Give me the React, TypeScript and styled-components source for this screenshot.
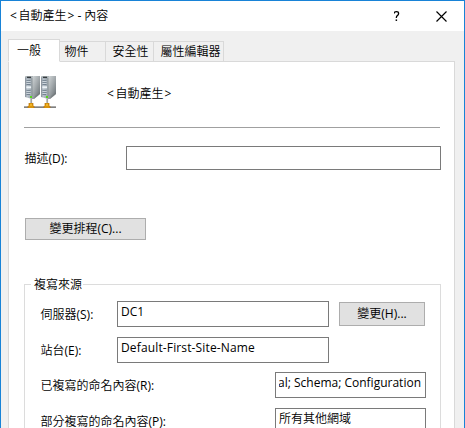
import React from "react";
import styled, { createGlobalStyle } from "styled-components";

const Global = createGlobalStyle`
  *, *::before, *::after { box-sizing: border-box; }
  body { margin: 0; overflow: hidden; }
`;

const Dialog = styled.div`
  width: 465px;
  height: 428px;
  overflow: hidden;
  display: flex;
  flex-direction: column;
  border: 1px solid #1883d7;
  border-bottom: 0;
  background: #f0f0f0;
  color: #000;
  font: 400 12px/16px "Open Sans", "Noto Sans CJK TC DemiLight", "Noto Sans CJK TC Light", "Noto Sans CJK TC", sans-serif;
  white-space: nowrap;
`;

const TitleBar = styled.header`
  height: 30px;
  flex: none;
  display: flex;
  align-items: center;
  background: #fff;
  padding: 0 17px 0 9px;
`;

const Title = styled.h1`
  margin: 0;
  flex: 1;
  font: inherit;
`;

const Bracket = styled.span<{ $closing?: boolean }>`
  margin-right: ${(p) => (p.$closing ? 0 : 1.5)}px;
  margin-left: ${(p) => (p.$closing ? 1 : 0)}px;
`;

const TitleButton = styled.button`
  border: 0;
  padding: 0;
  background: none;
  display: flex;
  margin-left: 35px;
`;

const Tabs = styled.nav`
  display: flex;
  align-items: flex-end;
  height: 23px;
  margin: 8px 0 -1px 7px;
  flex: none;
  position: relative;
`;

const Tab = styled.button<{ $width: number; $active?: boolean; $inset: number }>`
  width: ${(p) => p.$width}px;
  height: ${(p) => (p.$active ? 23 : 21)}px;
  border: 1px solid #d9d9d9;
  border-left-width: ${(p) => (p.$active ? 1 : 0)}px;
  border-bottom-color: ${(p) => (p.$active ? "#fff" : "#d9d9d9")};
  background: ${(p) => (p.$active ? "#fff" : "#f0f0f0")};
  padding: 0 0 0 ${(p) => p.$inset}px;
  font: inherit;
  line-height: 18px;
  color: #000;
  text-align: left;
`;

const Panel = styled.main`
  flex: 1;
  min-height: 0;
  margin: 0 9px 0 7px;
  padding: 14px 13px 0 15px;
  border: 1px solid #d9d9d9;
  border-bottom: 0;
  background: #fff;
`;

const Heading = styled.div`
  display: flex;
  align-items: center;
  height: 52px;
  gap: 51px;
  padding-bottom: 19px;
  border-bottom: 1px solid #a0a0a0;
  width: 416px;
`;

const ObjectName = styled.span`
  padding-top: 4px;
`;

const DescriptionRow = styled.div`
  display: flex;
  align-items: center;
  height: 24px;
  margin-top: 18px;
`;

const Label = styled.label<{ $width: number }>`
  width: ${(p) => p.$width}px;
  flex: none;
  padding-left: 0.5px;
  line-height: 13px;
`;

const Field = styled.div<{ $width: number; $spacing?: number; $end?: boolean }>`
  width: ${(p) => p.$width}px;
  height: 26px;
  flex: none;
  border: 1px solid #7a7a7a;
  background: #fff;
  padding: 2px 3px;
  letter-spacing: ${(p) => p.$spacing ?? 0}px;
  display: flex;
  justify-content: ${(p) => (p.$end ? "flex-end" : "flex-start")};
`;

const Clip = styled.span`
  overflow: hidden;
  display: flex;
  justify-content: flex-end;
  width: 143px;
  margin-right: 1px;
`;

const DescriptionField = styled(Field)`
  height: 24px;
`;

const PushButton = styled.button<{ $width: number; $height: number }>`
  width: ${(p) => p.$width}px;
  height: ${(p) => p.$height}px;
  padding: 0;
  border: 1px solid #adadad;
  background: #e1e1e1;
  color: #000;
  font: inherit;
  line-height: 18px;
`;

const ScheduleButton = styled(PushButton)`
  display: block;
  margin: 48px 0 0 1px;
`;

const Group = styled.fieldset`
  width: 417px;
  height: 170px;
  margin: 37px 0 0;
  padding: 0 14px 0 15px;
  border: 1px solid #dcdcdc;
  min-width: 0;
`;

const Legend = styled.legend`
  height: 15px;
  padding: 0 3px;
  margin-left: -9px;
  width: 52px;
`;

const Rows = styled.div`
  display: flex;
  flex-direction: column;
  gap: 10px;
  padding-top: 9px;
`;

const Row = styled.div<{ $tight?: boolean }>`
  display: flex;
  align-items: center;
  height: 26px;
  margin-top: ${(p) => (p.$tight ? -1 : 0)}px;
`;

const ChangeButton = styled(PushButton)`
  margin-left: 10px;
`;

const ServerPair = () => (
  <svg width="32" height="32" viewBox="0 0 32 32" aria-hidden="true">
    <defs>
      <linearGradient id="front" x2="1">
        <stop stopColor="#848c94" />
        <stop offset=".3" stopColor="#b9c3cc" />
        <stop offset="1" stopColor="#99a3aa" />
      </linearGradient>
      <linearGradient id="side" x2=".9" y2="1">
        <stop stopColor="#d3d8da" />
        <stop offset=".45" stopColor="#a7adb0" />
        <stop offset="1" stopColor="#687074" />
      </linearGradient>
      <g id="server">
        <path d="M1 1h7v22l-7-2z" fill="url(#front)" />
        <path d="M8 1 9.5 0H16v18l-6 5H8z" fill="url(#side)" />
        <path d="M1 .5 2 0h7v1.5H1z" fill="#aeb5b8" />
        <path d="M3 .7h4v1.4H3z" fill="#353b3f" />
        <path d="M2.5 4.5h4M2.5 6.5h4M2.5 8.5h4M2.5 14.5h4M2.5 16.5h4M2.5 18.5h3.5" stroke="#667584" strokeWidth=".8" />
        <path d="M2.5 5.4h4M2.5 7.4h4M2.5 15.4h4M2.5 17.4h4" stroke="#dce4ea" strokeWidth=".7" />
        <path d="M2.3 10.3h4.8v2H2.3z" fill="#edf3f7" />
        <path d="M8.2 2v18" stroke="#7e878c" strokeWidth=".6" />
        <path d="m10 23 6-5v-2l-5 4z" fill="#73797c" opacity=".6" />
        <path d="M6 20h2v2H6z" fill="#55d51d" />
        <path d="M7.2 22.5v5" stroke="#a1a1a1" strokeWidth="1.8" />
        <path d="M6.6 22.5v5" stroke="#cacaca" strokeWidth=".6" />
      </g>
      <g id="plug">
        <path d="M5 27h4v2l1 1v2H4v-2l1-1z" fill="#d7920c" />
        <path d="M4 30v2M10 30v2M5 27v2M9 27v2" stroke="#b16f12" strokeWidth=".7" />
        <path d="M6 28h2v2H6z" fill="#f1b525" />
      </g>
    </defs>
    <use href="#server" />
    <use href="#server" x="16" />
    <path d="M0 31h32" stroke="#808080" strokeWidth="2" />
    <path d="M0 30.5h32" stroke="#aaa" strokeWidth="1" />
    <use href="#plug" />
    <use href="#plug" x="16" />
  </svg>
);

const HelpGlyph = () => (
  <svg width="7" height="11" viewBox="0 0 7 11" fill="none" stroke="#000" aria-hidden="true">
    <path d="M.3 2.5V1.3Q1.3.7 2.5.7 4.6.7 4.6 2.5 4.6 3.6 3.6 4.4 2.3 5.3 2.3 7" strokeWidth="1.3" />
    <path d="M1.6 9.2h1.5" strokeWidth="1.5" />
  </svg>
);

const CloseGlyph = () => (
  <svg width="11" height="11" viewBox="0 0 11 11" stroke="#000" strokeWidth="1.15" aria-hidden="true">
    <path d="m.5.5 10 10m0-10-10 10" />
  </svg>
);

const GeneratedName = () => (
  <>
    <Bracket>&lt;</Bracket>自動產生<Bracket $closing>&gt;</Bracket>
  </>
);

export default function App() {
  return (
    <>
      <Global />
      <Dialog>
        <TitleBar>
          <Title><GeneratedName /> - 內容</Title>
          <TitleButton aria-label="說明"><HelpGlyph /></TitleButton>
          <TitleButton aria-label="關閉"><CloseGlyph /></TitleButton>
        </TitleBar>
        <Tabs>
          <Tab $active $width={52} $inset={8}>一般</Tab>
          <Tab $width={46} $inset={4.5}>物件</Tab>
          <Tab $width={48} $inset={6.5}>安全性</Tab>
          <Tab $width={70} $inset={6.5}>屬性編輯器</Tab>
        </Tabs>
        <Panel>
          <Heading>
            <ServerPair />
            <ObjectName><GeneratedName /></ObjectName>
          </Heading>
          <DescriptionRow>
            <Label $width={102}>描述(D):</Label>
            <DescriptionField $width={315} />
          </DescriptionRow>
          <ScheduleButton $width={121} $height={22}>變更排程(C)...</ScheduleButton>
          <Group>
            <Legend>複寫來源</Legend>
            <Rows>
              <Row>
                <Label $width={77}>伺服器(S):</Label>
                <Field $width={212}>DC1</Field>
                <ChangeButton $width={86} $height={24}>變更(H)...</ChangeButton>
              </Row>
              <Row>
                <Label $width={77}>站台(E):</Label>
                <Field $width={212} $spacing={0.14}>Default-First-Site-Name</Field>
              </Row>
              <Row $tight>
                <Label $width={235}>已複寫的命名內容(R):</Label>
                <Field $width={151} $end><Clip>al; Schema; Configuration</Clip></Field>
              </Row>
              <Row>
                <Label $width={235}>部分複寫的命名內容(P):</Label>
                <Field $width={151}>所有其他網域</Field>
              </Row>
            </Rows>
          </Group>
        </Panel>
      </Dialog>
    </>
  );
}
